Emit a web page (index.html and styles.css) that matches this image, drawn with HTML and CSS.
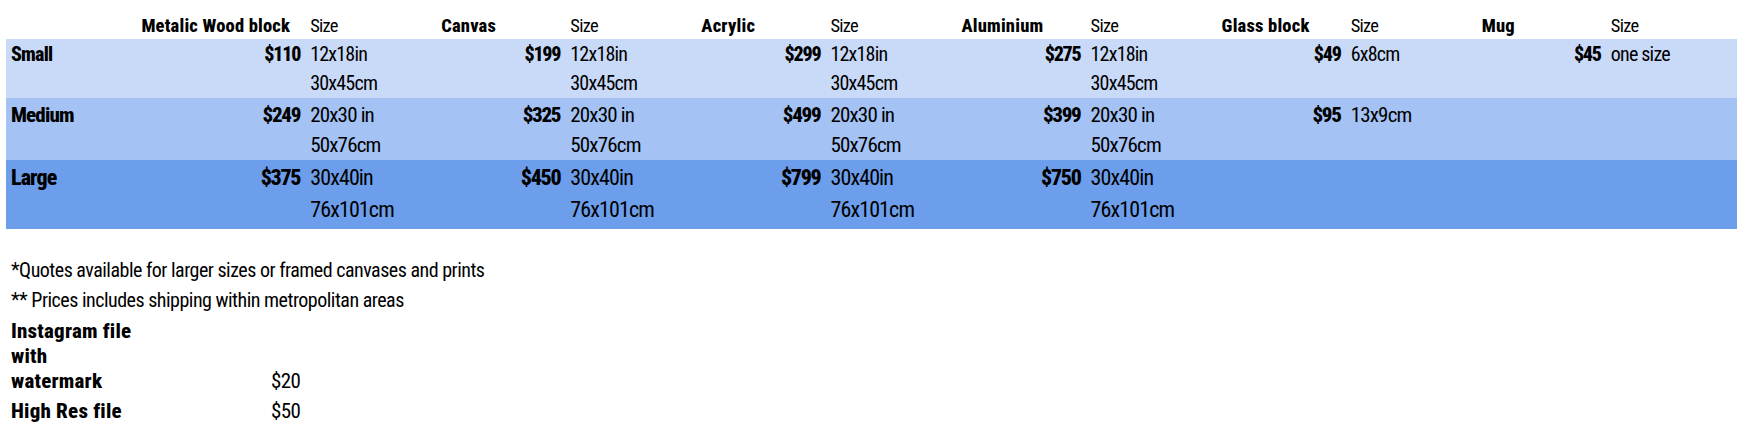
FILE: index.html
```html
<!DOCTYPE html>
<html lang="en">
<head>
<meta charset="utf-8">
<title>Price list</title>
<link rel="stylesheet" href="styles.css">
</head>
<body>
<div class="sheet">
  <table class="prices">
    <colgroup>
      <col class="c-label">
      <col class="c-price"><col class="c-size">
      <col class="c-price"><col class="c-size">
      <col class="c-price"><col class="c-size">
      <col class="c-price"><col class="c-size">
      <col class="c-price"><col class="c-size">
      <col class="c-price"><col class="c-size">
    </colgroup>
    <tr class="row-head">
      <th class="prod prod-first" colspan="2">Metalic Wood block</th><th class="size-h">Size</th>
      <th class="prod">Canvas</th><th class="size-h">Size</th>
      <th class="prod">Acrylic</th><th class="size-h">Size</th>
      <th class="prod">Aluminium</th><th class="size-h">Size</th>
      <th class="prod">Glass block</th><th class="size-h">Size</th>
      <th class="prod">Mug</th><th class="size-h">Size</th>
    </tr>
    <tr class="row-small">
      <th class="label">Small</th>
      <td class="price">$110</td><td class="size">12x18in<br>30x45cm</td>
      <td class="price">$199</td><td class="size">12x18in<br>30x45cm</td>
      <td class="price">$299</td><td class="size">12x18in<br>30x45cm</td>
      <td class="price">$275</td><td class="size">12x18in<br>30x45cm</td>
      <td class="price">$49</td><td class="size">6x8cm</td>
      <td class="price">$45</td><td class="size">one size</td>
    </tr>
    <tr class="row-medium">
      <th class="label">Medium</th>
      <td class="price">$249</td><td class="size">20x30 in<br>50x76cm</td>
      <td class="price">$325</td><td class="size">20x30 in<br>50x76cm</td>
      <td class="price">$499</td><td class="size">20x30 in<br>50x76cm</td>
      <td class="price">$399</td><td class="size">20x30 in<br>50x76cm</td>
      <td class="price">$95</td><td class="size">13x9cm</td>
      <td class="price"></td><td class="size"></td>
    </tr>
    <tr class="row-large">
      <th class="label">Large</th>
      <td class="price">$375</td><td class="size">30x40in<br>76x101cm</td>
      <td class="price">$450</td><td class="size">30x40in<br>76x101cm</td>
      <td class="price">$799</td><td class="size">30x40in<br>76x101cm</td>
      <td class="price">$750</td><td class="size">30x40in<br>76x101cm</td>
      <td class="price"></td><td class="size"></td>
      <td class="price"></td><td class="size"></td>
    </tr>
  </table>

  <div class="notes">
    <p>*Quotes available for larger sizes or framed canvases and prints</p>
    <p>** Prices includes shipping within metropolitan areas</p>
  </div>

  <div class="extras">
    <div class="extra-name extra-first">Instagram file<br>with<br>watermark</div>
    <div class="extra-price extra-first">$20</div>
    <div class="extra-name extra-second">High Res file</div>
    <div class="extra-price extra-second">$50</div>
  </div>
</div>
</body>
</html>
```

FILE: styles.css
```css
html, body {
  margin: 0;
  padding: 0;
  background: #ffffff;
}

body {
  font-family: "Roboto Condensed", "Roboto", "Open Sans", sans-serif;
  font-stretch: 75%;
  font-weight: 450;
  color: #000000;
}

.sheet {
  padding-left: 6px;
}

.prices {
  border-collapse: collapse;
  border-spacing: 0;
  table-layout: fixed;
  width: 1731px;
}

.c-label { width: 170px; }
.c-price { width: 127px; }
.c-size  { width: 133px; }

.prices th,
.prices td {
  padding: 0;
  vertical-align: top;
  white-space: nowrap;
  text-align: left;
  overflow: visible;
}

/* header row */
.row-head { height: 39px; }
.prices .row-head th {
  font-size: 18.5px;
  line-height: 22px;
  padding-top: 15px;
}
.prices .row-head .prod {
  font-weight: 800;
  padding-left: 5px;
  letter-spacing: 0.01em;
}
.prices .row-head .prod-first {
  text-align: right;
  padding-left: 0;
  padding-right: 13px;
}
.prices .row-head .size-h {
  font-weight: 450;
  padding-left: 7px;
  letter-spacing: -0.04em;
}

/* body rows */
.row-small  { height: 59px; background: #c9daf8; }
.row-medium { height: 62px; background: #a4c2f4; }
.row-large  { height: 69px; background: #6d9eeb; }

.prices .row-small th,
.prices .row-small td {
  font-size: 20px;
  line-height: 29px;
  padding-top: 1px;
}
.prices .row-medium th,
.prices .row-medium td {
  font-size: 21px;
  line-height: 30px;
  padding-top: 2px;
}
.prices .row-large th,
.prices .row-large td {
  font-size: 22px;
  line-height: 32px;
  padding-top: 2px;
}

.prices .label {
  font-weight: 800;
  padding-left: 5px;
  letter-spacing: -0.04em;
}
.prices .price {
  font-weight: 800;
  text-align: right;
  padding-right: 3px;
  letter-spacing: -0.06em;
}
.prices .size {
  font-weight: 450;
  padding-left: 7px;
  letter-spacing: -0.04em;
}

/* notes */
.notes {
  margin-top: 26px;
  padding-left: 5px;
  font-size: 20px;
  line-height: 30px;
  letter-spacing: -0.025em;
}
.notes p {
  margin: 0;
}

/* extras */
.extras {
  display: grid;
  grid-template-columns: 260px auto;
  align-items: end;
  padding-left: 5px;
}
.extra-name {
  font-weight: 800;
  font-size: 21px;
  letter-spacing: 0.01em;
}
.extra-price {
  font-weight: 450;
  font-size: 21px;
  letter-spacing: -0.03em;
}
.extra-first {
  padding-top: 4px;
  line-height: 25px;
}
.extra-second {
  padding-top: 2px;
  line-height: 30px;
}
```
